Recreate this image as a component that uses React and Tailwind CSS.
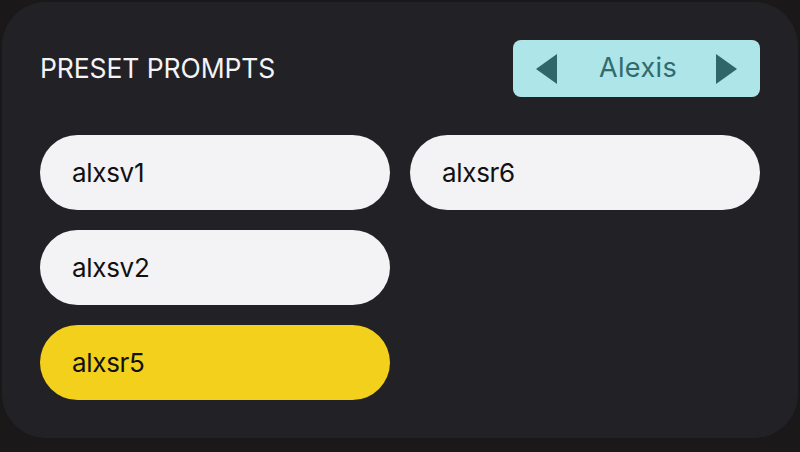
import React, { useState } from 'react'

// column-major order: left column first, then right
const prompts = [
  { id: 'alxsv1', active: false },
  { id: 'alxsv2', active: false },
  { id: 'alxsr5', active: true },
  { id: 'alxsr6', active: false },
]

const Arrow = ({ dir }) => (
  <svg width="22" height="30" viewBox="0 0 22 30" className="shrink-0">
    {dir === 'left' ? (
      <polygon points="21,0 21,30 0,15" fill="#2f6668" />
    ) : (
      <polygon points="1,0 1,30 22,15" fill="#2f6668" />
    )}
  </svg>
)

const App = () => {
  const [voice] = useState('Alexis')

  return (
    <div
      className="w-[800px] h-[452px] bg-[#1a1819] pt-[2px] px-[2px] pb-[14px]"
      style={{ fontFamily: 'Inter, "Liberation Sans", sans-serif' }}
    >
      <div className="h-full rounded-[44px] bg-[#222125] px-[38px] pt-[38px]">
        <div className="flex items-center justify-between h-[57px]">
          <h2 className="text-[26.5px] text-[#f4f3f6] tracking-[-0.1px] font-normal">PRESET PROMPTS</h2>
          <div className="w-[247px] h-[57px] rounded-[8px] bg-[#ade5e8] flex items-center justify-between px-[23px]">
            <Arrow dir="left" />
            <span className="text-[27px] text-[#336a6c] tracking-[0.4px] pl-[3px]">{voice}</span>
            <Arrow dir="right" />
          </div>
        </div>

        <div className="grid grid-cols-2 grid-rows-3 grid-flow-col gap-5 mt-[38px]">
          {prompts.map((p) => (
            <button
              key={p.id}
              className={`h-[75px] rounded-full text-left pl-8 text-[26px] text-[#111] tracking-[-0.3px] ${p.active ? 'bg-[#f2d01c]' : 'bg-[#f3f2f5]'}`}
            >
              {p.id}
            </button>
          ))}
        </div>
      </div>
    </div>
  )
}

export default App
